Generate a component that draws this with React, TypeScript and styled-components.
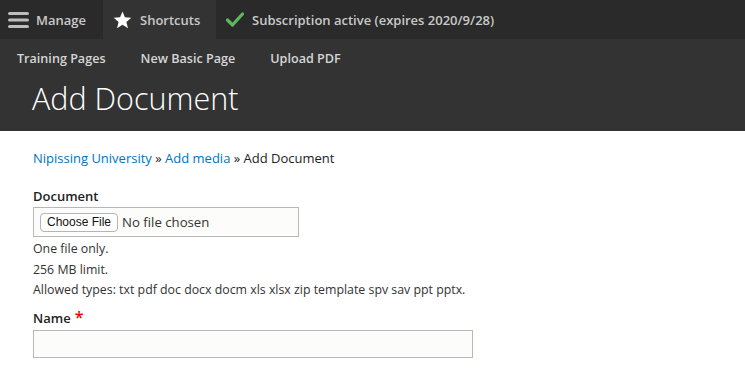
import React from "react";
import styled, { createGlobalStyle } from "styled-components";

const Global = createGlobalStyle`
  html, body { margin: 0; padding: 0; background: #fff; }
  body { font-family: "Open Sans", "Liberation Sans", sans-serif; color: #222; }
  * { box-sizing: border-box; }
`;

const TopBar = styled.div`
  display: flex;
  align-items: stretch;
  height: 39px;
  background: #2a2a2a;
`;

const Tab = styled.div<{ $active?: boolean; $pad: number; $gap: number; $w?: number }>`
  display: flex;
  align-items: center;
  gap: ${(p) => p.$gap}px;
  padding: 0 0 0 ${(p) => p.$pad}px;
  background: ${(p) => (p.$active ? "#333333" : "transparent")};
  color: #c9c9c9;
  font-size: 13px;
  font-weight: 600;
  width: ${(p) => (p.$w ? `${p.$w}px` : "auto")};
`;

const Tray = styled.div`
  display: flex;
  align-items: center;
  height: 39px;
  background: #333333;
  padding-left: 17px;
  gap: 35px;
`;

const TrayLink = styled.span`
  color: #d6d6d6;
  font-size: 12.6px;
  font-weight: 600;
`;

const Header = styled.div`
  background: #333333;
  height: 53px;
  padding-left: 32px;
`;

const Title = styled.h1`
  margin: 0;
  font-weight: 300;
  font-size: 30.5px;
  line-height: 40px;
  color: #ffffff;
`;

const Content = styled.div`
  padding: 18px 33px 0;
  font-size: 13px;
`;

const Breadcrumb = styled.div`
  color: #222;
  font-size: 13px;
  line-height: 18px;
`;

const Link = styled.a`
  color: #0074bd;
  text-decoration: none;
`;

const Field = styled.div<{ $top: number }>`
  margin-top: ${(p) => p.$top}px;
`;

const Label = styled.div<{ $gap: number }>`
  font-weight: 600;
  font-size: 13px;
  line-height: 18px;
  margin-bottom: ${(p) => p.$gap}px;
  color: #222;
`;

const Required = styled.span`
  color: #e00;
  font-size: 16px;
  margin-left: 4px;
`;

const FileBox = styled.div`
  display: flex;
  align-items: center;
  gap: 4px;
  width: 266px;
  height: 30px;
  border: 1px solid #b8b8b8;
  background: #fcfcfa;
  padding-left: 6px;
`;

const FileButton = styled.span`
  display: inline-flex;
  align-items: center;
  height: 19px;
  padding: 0 6px;
  border: 1px solid #b5b5b5;
  border-radius: 4px;
  background: #fff;
  font-family: "Liberation Sans", Arial, sans-serif;
  font-size: 12px;
  color: #111;
`;

const FileText = styled.span`
  font-size: 13.2px;
  color: #333;
`;

const Descriptions = styled.div`
  margin-top: 2px;
`;

const Desc = styled.div`
  font-size: 12.35px;
  line-height: 20.5px;
  color: #333;
`;

const TextInput = styled.div`
  width: 440px;
  height: 28px;
  border: 1px solid #b8b8b8;
  background: #fcfcfa;
`;

const Burger = () => (
  <svg width="21" height="18" viewBox="0 0 21 18">
    <rect x="0" y="1" width="21" height="3" rx="1.5" fill="#bdbdbd" />
    <rect x="0" y="7.5" width="21" height="3" rx="1.5" fill="#bdbdbd" />
    <rect x="0" y="14" width="21" height="3" rx="1.5" fill="#bdbdbd" />
  </svg>
);

const Star = () => (
  <svg width="19" height="18" viewBox="0 0 24 23">
    <path
      d="M12 0.5l3.1 7.6 8.2.6-6.3 5.3 2 8-7-4.4-7 4.4 2-8L.7 8.7l8.2-.6z"
      fill="#ffffff"
    />
  </svg>
);

const Check = () => (
  <svg width="18" height="15" viewBox="0 0 18 15">
    <path d="M1.5 8 L6.5 13 L16.5 2" stroke="#5cb85c" strokeWidth="3.2" fill="none" strokeLinecap="round" strokeLinejoin="round" />
  </svg>
);

export default function App() {
  return (
    <>
      <Global />
      <TopBar>
        <Tab $pad={8} $gap={7} $w={103}>
          <Burger />
          <span>Manage</span>
        </Tab>
        <Tab $active $pad={10} $gap={8} $w={113}>
          <Star />
          <span>Shortcuts</span>
        </Tab>
        <Tab $pad={10} $gap={8}>
          <Check />
          <span>Subscription active (expires 2020/9/28)</span>
        </Tab>
      </TopBar>
      <Tray>
        <TrayLink>Training Pages</TrayLink>
        <TrayLink>New Basic Page</TrayLink>
        <TrayLink>Upload PDF</TrayLink>
      </Tray>
      <Header>
        <Title>Add Document</Title>
      </Header>
      <Content>
        <Breadcrumb>
          <Link href="#">Nipissing University</Link> » <Link href="#">Add media</Link> » Add Document
        </Breadcrumb>
        <Field $top={20}>
          <Label $gap={2}>Document</Label>
          <FileBox>
            <FileButton>Choose File</FileButton>
            <FileText>No file chosen</FileText>
          </FileBox>
          <Descriptions>
            <Desc>One file only.</Desc>
            <Desc>256 MB limit.</Desc>
            <Desc>Allowed types: txt pdf doc docx docm xls xlsx zip template spv sav ppt pptx.</Desc>
          </Descriptions>
        </Field>
        <Field $top={7}>
          <Label $gap={3}>
            Name<Required>*</Required>
          </Label>
          <TextInput />
        </Field>
      </Content>
    </>
  );
}
